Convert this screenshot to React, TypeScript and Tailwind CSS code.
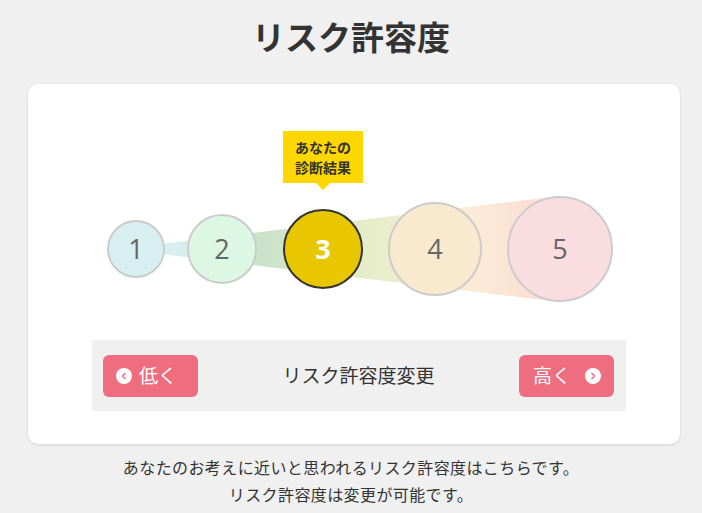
import React from "react";

const jp = { fontFamily: '"Noto Sans CJK JP", "Noto Sans", sans-serif' };

interface Level {
  n: number;
  size: string;
  bg: string;
  active?: boolean;
}

const levels: Level[] = [
  { n: 1, size: "w-[58px] h-[58px]", bg: "bg-[#d8eff1]" },
  { n: 2, size: "w-[70px] h-[70px]", bg: "bg-[#dcf7e3]" },
  { n: 3, size: "w-[80px] h-[80px]", bg: "bg-[#e8c600]", active: true },
  { n: 4, size: "w-[94px] h-[94px]", bg: "bg-[#f8e9cf]" },
  { n: 5, size: "w-[106px] h-[106px]", bg: "bg-[#fadde0]" },
];

function Chevron({ dir }: { dir: "left" | "right" }) {
  return (
    <span className="flex h-[16px] w-[16px] items-center justify-center rounded-full bg-white">
      <svg width="8" height="8" viewBox="0 0 8 8">
        <path
          d={dir === "left" ? "M5 1.5 L2.5 4 L5 6.5" : "M3 1.5 L5.5 4 L3 6.5"}
          fill="none"
          stroke="#ee6e80"
          strokeWidth="1.6"
          strokeLinecap="round"
          strokeLinejoin="round"
        />
      </svg>
    </span>
  );
}

export default function App() {
  return (
    <div className="min-h-[513px] w-[702px] bg-[#f0f0f0] text-[#333]" style={jp}>
      <h1 className="pt-[14px] text-center text-[33px] font-bold leading-[44px] text-[#333]">
        リスク許容度
      </h1>

      <div className="ml-[28px] mt-[26px] w-[652px] rounded-[10px] bg-white pb-[33px] pl-[64px] pr-[54px] pt-[112px] shadow-[0_1px_3px_rgba(0,0,0,0.12)]">
        {/* circles */}
        <div className="relative ml-[15px] flex h-[106px] w-[506px] items-center">
          <svg
            className="absolute left-0 top-0"
            width="506"
            height="106"
            viewBox="0 0 506 106"
          >
            <defs>
              <linearGradient id="cone" x1="29" y1="0" x2="453" y2="0" gradientUnits="userSpaceOnUse">
                <stop offset="0.1" stopColor="#d9eeee" />
                <stop offset="0.3" stopColor="#c9e3c9" />
                <stop offset="0.55" stopColor="#e7edc9" />
                <stop offset="0.8" stopColor="#fbebd6" />
                <stop offset="1" stopColor="#fbd9d3" />
              </linearGradient>
            </defs>
            <polygon points="29,51 29,55 453,106 453,0" fill="url(#cone)" />
          </svg>

          {levels.map((l, i) => (
            <div
              key={l.n}
              className={`relative flex shrink-0 items-center justify-center rounded-full ${l.size} ${l.bg} ${
                l.active ? "border-2 border-[#333]" : "border-2 border-[#cccccc]"
              } ${i === 0 ? "" : i === 1 ? "ml-[22px]" : i === 2 ? "ml-[26px]" : "ml-[25px]"}`}
            >
              {l.active && (
                <div className="absolute bottom-full left-1/2 mb-[28px] flex h-[52px] w-[80px] -translate-x-1/2 flex-col items-center justify-center bg-[#ffd700] text-[14px] font-bold leading-[20px] text-[#333]">
                  <span>あなたの</span>
                  <span>診断結果</span>
                  <span className="absolute left-1/2 top-full h-0 w-0 -translate-x-1/2 border-x-[7px] border-t-[7px] border-x-transparent border-t-[#ffd700]" />
                </div>
              )}
              <span
                className={
                  l.active
                    ? "text-[27px] font-bold text-white"
                    : "text-[27px] text-[#666]"
                }
                style={{ fontFamily: '"Open Sans", "Noto Sans", sans-serif' }}
              >
                {l.n}
              </span>
            </div>
          ))}
        </div>

        {/* change bar */}
        <div className="mt-[38px] flex h-[71px] w-[534px] items-center justify-between bg-[#f0f0f0] pl-[11px] pr-[12px]">
          <button className="flex h-[42px] w-[95px] items-center gap-[7px] rounded-[6px] bg-[#ee6e80] pl-[13px] text-[19px] text-white">
            <Chevron dir="left" />
            <span>低く</span>
          </button>
          <span className="text-[19px] text-[#333]">リスク許容度変更</span>
          <button className="flex h-[42px] w-[95px] items-center justify-end gap-[14px] rounded-[6px] bg-[#ee6e80] pr-[13px] text-[19px] text-white">
            <span>高く</span>
            <Chevron dir="right" />
          </button>
        </div>
      </div>

      <div className="mt-[10px] text-center text-[16px] leading-[27px] tracking-[0.4px] text-[#333]">
        <p>あなたのお考えに近いと思われるリスク許容度はこちらです。</p>
        <p>リスク許容度は変更が可能です。</p>
      </div>
    </div>
  );
}
